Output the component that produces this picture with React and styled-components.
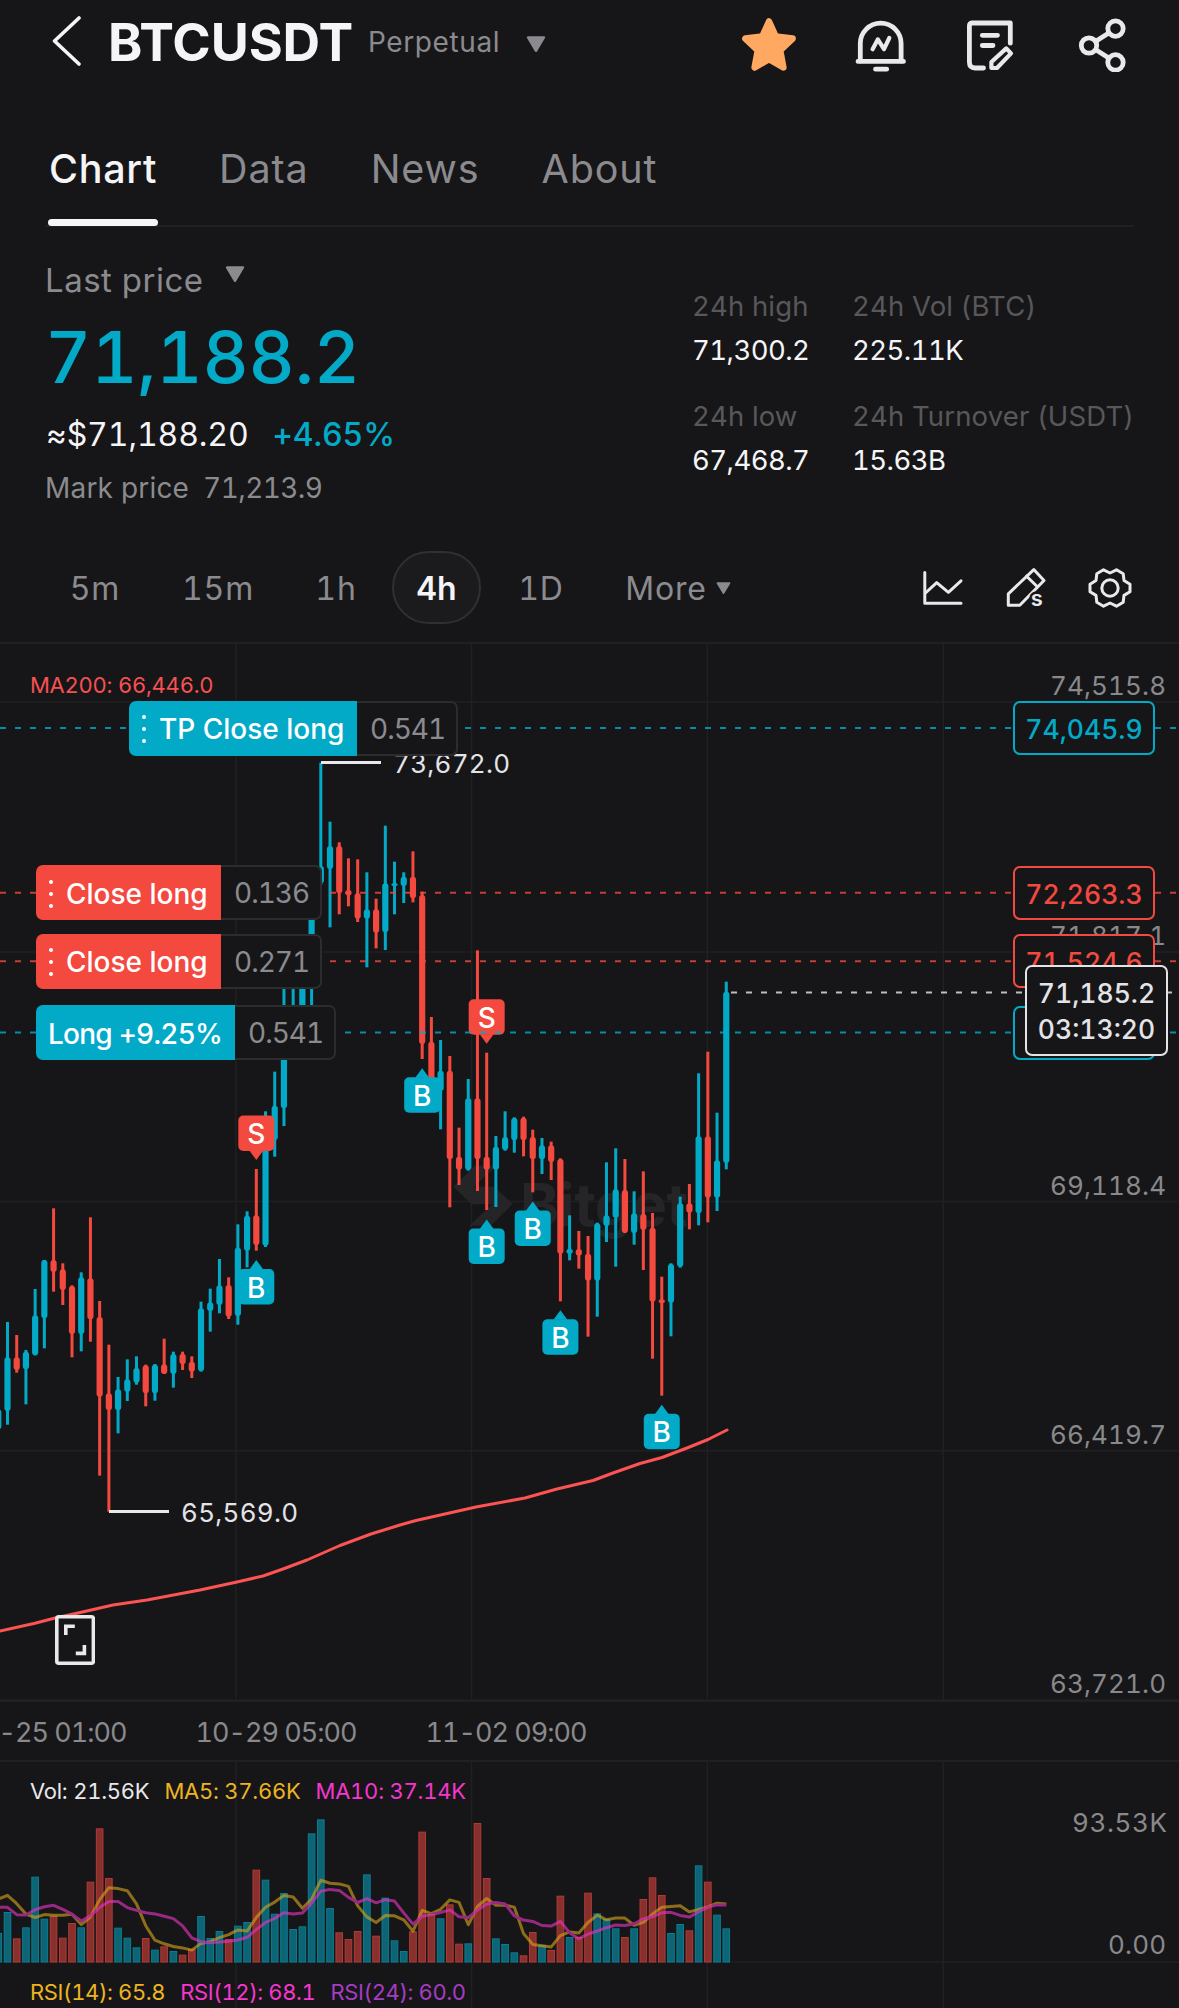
import React from 'react';
import styled, { createGlobalStyle, css } from 'styled-components';

const UP = '#03aac8';
const DOWN = '#f3493f';
const FONT = "'Inter', 'Liberation Sans', sans-serif";

// candle columns are evenly spaced, the first one is cut by the left edge
const STEP = 9.215;
const colX = (i) => 7.5 + STEP * i;

// [up, high, body top, body bottom, low]
const candles = [
  [1, 988, 988, 1048, 1048],
  [1, 726, 832, 993, 1034],
  [0, 765, 832, 870, 878],
  [1, 810, 815, 868, 973],
  [1, 627, 706, 826, 826],
  [1, 540, 540, 715, 805],
  [0, 385, 540, 576, 635],
  [0, 550, 568, 630, 675],
  [0, 616, 618, 762, 832],
  [1, 577, 592, 762, 814],
  [0, 412, 595, 718, 785],
  [0, 663, 711, 950, 1187],
  [0, 794, 940, 991, 1295],
  [1, 891, 928, 991, 1060],
  [1, 838, 898, 935, 963],
  [1, 829, 864, 908, 914],
  [0, 854, 856, 940, 979],
  [1, 852, 854, 940, 962],
  [0, 776, 853, 882, 882],
  [1, 815, 822, 882, 923],
  [0, 815, 821, 853, 870],
  [0, 829, 845, 875, 894],
  [1, 665, 685, 873, 875],
  [1, 626, 667, 693, 755],
  [1, 537, 616, 675, 700],
  [0, 592, 615, 710, 717],
  [1, 433, 503, 708, 734],
  [1, 394, 407, 512, 562],
  [0, 267, 406, 495, 512],
  [1, 94, 130, 497, 501],
  [1, -25, 77, 180, 230],
  [1, -400, -150, 85, 138],
  [1, -400, -200, -110, -90],
  [1, -420, -400, -110, -90],
  [1, -620, -600, -320, -150],
  [1, -952, -642, -590, -585],
  [1, -775, -702, -633, -458],
  [0, -713, -702, -560, -497],
  [0, -665, -570, -553, -521],
  [0, -662, -560, -484, -474],
  [1, -623, -512, -484, -338],
  [0, -544, -512, -442, -395],
  [1, -763, -590, -443, -390],
  [1, -655, -591, -582, -497],
  [1, -623, -610, -582, -531],
  [0, -686, -610, -545, -533],
  [0, -565, -555, -108, -63],
  [0, -189, -115, 10, 15],
  [1, -120, -28, 33, 148],
  [0, -72, -28, 238, 382],
  [0, 143, 230, 269, 315],
  [1, -3, 55, 270, 272],
  [0, -389, 55, 238, 333],
  [0, -82, 230, 269, 390],
  [1, 168, 200, 269, 381],
  [1, 94, 171, 210, 212],
  [1, 112, 114, 181, 218],
  [0, 110, 113, 181, 229],
  [0, 149, 171, 238, 337],
  [1, 174, 196, 238, 282],
  [0, 185, 196, 246, 300],
  [0, 235, 237, 521, 664],
  [1, 406, 506, 522, 541],
  [0, 453, 507, 527, 566],
  [0, 468, 521, 602, 770],
  [1, 428, 430, 602, 710],
  [1, 247, 406, 438, 486],
  [1, 205, 328, 413, 560],
  [0, 237, 330, 458, 459],
  [1, 334, 400, 459, 494],
  [0, 274, 402, 450, 570],
  [0, 399, 443, 665, 836],
  [0, 590, 658, 669, 947],
  [1, 550, 552, 668, 769],
  [1, 350, 370, 560, 563],
  [0, 312, 370, 398, 448],
  [1, -20, 169, 400, 436],
  [0, -85, 169, 353, 427],
  [1, 98, 241, 353, 393],
  [1, -295, -265, 249, 268],
];

const candleY = (v) => 438 + v / 3;

// volumes before the visible range, only used by the averages
const volumeHistory = [150, 291, 114, 96, 44, 95, 196, 259, 308];
const volumes = [
  87, 150, 71, 104, 256, 130, 139, 73, 117, 104, 241, 401, 252, 103, 73, 44,
  72, 37, 47, 33, 22, 39, 138, 72, 93, 69, 109, 120, 277, 247, 145, 207, 99,
  107, 386, 428, 162, 89, 69, 93, 263, 79, 193, 65, 33, 92, 391, 144, 131, 173,
  55, 56, 417, 252, 71, 54, 29, 20, 90, 51, 36, 199, 75, 75, 208, 146, 129,
  101, 75, 101, 189, 254, 201, 87, 114, 95, 290, 241, 142, 101,
];

const VOL_BASE = 202;

const averageLine = (size) => {
  const all = [...volumeHistory, ...volumes];
  return volumes
    .map((_, i) => {
      const end = i + volumeHistory.length + 1;
      const part = all.slice(end - size, end);
      const avg = part.reduce((a, b) => a + b, 0) / size;
      return `${colX(i - 1).toFixed(1)},${(VOL_BASE - avg / 3).toFixed(1)}`;
    })
    .join(' ');
};

const gridX = [235.7, 471.5, 707.4, 943.3];

const priceAxis = [
  { y: 60, label: '74,515.8' },
  { y: 310, label: '71,817.1' },
  { y: 559.5, label: '69,118.4' },
  { y: 808.7, label: '66,419.7' },
  { y: 1058, label: '63,721.0' },
];

const orders = [
  { y: 86, left: 129, tone: UP, grip: true, text: 'TP Close long', width: 228, size: '0.541', price: '74,045.9', from: 465 },
  { y: 250.7, left: 36, tone: DOWN, grip: true, text: 'Close long', width: 185, size: '0.136', price: '72,263.3', from: 330 },
  { y: 319.2, left: 36, tone: DOWN, grip: true, text: 'Close long', width: 185, size: '0.271', price: '71,524.6', from: 330 },
  { y: 390.5, left: 36, tone: UP, text: 'Long +9.25%', width: 199, size: '0.541', from: 345 },
];

const trades = [
  { i: 27, side: 'S', y: 518 },
  { i: 27, side: 'B', y: 618 },
  { i: 45, side: 'B', y: 426.3 },
  { i: 52, side: 'S', y: 401.8 },
  { i: 52, side: 'B', y: 577.4 },
  { i: 57, side: 'B', y: 559.4 },
  { i: 60, side: 'B', y: 668.2 },
  { i: 71, side: 'B', y: 762.7 },
];

const stats = [
  ['24h high', '71,300.2'],
  ['24h Vol (BTC)', '225.11K'],
  ['24h low', '67,468.7'],
  ['24h Turnover (USDT)', '15.63B'],
];

const Caret = ({ size = 20 }) => (
  <svg width={size} height={size * 0.82} viewBox="0 0 20 16.4">
    <path d="M2 1.5H18L10 14.8Z" fill="#8b8b8f" stroke="#8b8b8f" strokeWidth="2.4" strokeLinejoin="round" />
  </svg>
);

const StarIcon = () => (
  <HeaderIcon viewBox="0 0 56 56">
    <path
      d="M28 5.5L34.8 20.6L51.6 22.6L39.2 34.4L42.4 51.5L28 43.2L13.6 51.5L16.8 34.4L4.4 22.6L21.2 20.6Z"
      fill="#ffa862"
      stroke="#ffa862"
      strokeWidth="6.5"
      strokeLinejoin="round"
    />
  </HeaderIcon>
);

const AlertIcon = () => (
  <HeaderIcon viewBox="0 0 56 56">
    <path d="M8.3 45V27.5a20.4 20.4 0 0 1 40.8 0V45" />
    <path d="M6 45.4H51.5M23.5 53.2H34.7" />
    <path d="M20.6 33.2L25.8 23.4L32 33.2L37.3 22" strokeWidth="4.2" />
  </HeaderIcon>
);

const NoteIcon = () => (
  <HeaderIcon viewBox="0 0 56 56">
    <path d="M47.3 27.2V7H9a3 3 0 0 0-2.6 3V46q0 6 5.6 6H20.5" />
    <path d="M19.3 19.3H34.5M19.3 29.5H30" />
    <path d="M28.4 52V46L43.3 32.4L48 37.4L34 52Z" strokeWidth="4.2" />
  </HeaderIcon>
);

const ShareIcon = () => (
  <HeaderIcon viewBox="0 0 56 56">
    <circle cx="41.5" cy="12.6" r="7.7" />
    <circle cx="15" cy="29.5" r="7.7" />
    <circle cx="41.5" cy="46.4" r="7.7" />
    <path d="M21.8 25.2L34.8 16.9M21.8 33.8L34.8 42.1" />
  </HeaderIcon>
);

const LineIcon = () => (
  <ToolIcon viewBox="0 0 44 44">
    <path d="M4.8 6.5V37.3H41" />
    <path d="M5.5 27L16.7 16.6L28.4 26.3L41 14.8" />
  </ToolIcon>
);

const DrawIcon = () => (
  <ToolIcon viewBox="0 0 44 44">
    <path d="M4.3 39.3V27.8L29.8 3.6L40 14.5L15.8 39.3Z" />
    <path d="M22.6 10.2L33.4 20.8" />
    <text x="26.8" y="40" fill="#e9e9ec" stroke="#161618" strokeWidth="5" paintOrder="stroke" fontSize="22" fontWeight="600" fontFamily={FONT}>
      s
    </text>
  </ToolIcon>
);

const GearIcon = () => (
  <ToolIcon viewBox="0 0 44 44">
    <path d="M15.5 3.8L22 7L28.5 3.8L35.2 7.8L36 14.4L42 18.2V25.8L36 29.4L35.2 36.2L28.5 40.2L22 37L15.5 40.2L8.8 36.2L8 29.4L2 25.8V18.2L8 14.4L8.8 7.8Z" />
    <circle cx="22" cy="22" r="8.2" />
  </ToolIcon>
);

const TradeMark = ({ i, side, y }) => {
  const buy = side === 'B';
  const top = buy ? y + 9 : y - 44.5;
  const base = buy ? y + 9.5 : y - 9.5;
  const x = colX(i);
  return (
    <g>
      <rect x={x - 18} y={top} width="36" height="35.5" rx="5" fill={buy ? UP : DOWN} />
      <path d={`M${x} ${y}L${x - 7} ${base}H${x + 7}Z`} fill={buy ? UP : DOWN} />
      <ChartText x={x} y={top + 28.5} textAnchor="middle" fill="#fff" fontSize="28" fontWeight="500">
        {side}
      </ChartText>
    </g>
  );
};

const PriceChart = () => (
  <ChartSvg viewBox="0 0 1179 1058" height="1058">
    <g stroke="#202023" strokeWidth="1.5">
      {gridX.map((x) => <path key={x} d={`M${x} 0V1058`} />)}
      {priceAxis.map((p) => <path key={p.y} d={`M0 ${p.y}H1179`} />)}
    </g>
    <g fill="#252528">
      <path d="M475 523.7H496.7L474 544.7L492.3 562.3H471.7L453.3 544.7Z" />
      <path d="M474 544.7H494.3L512.7 562L490.7 583.7H469L492.3 562.3Z" />
      <ChartText x="520" y="583.5" fontSize="59" fontWeight="700" textLength="168">Bitget</ChartText>
    </g>
    {priceAxis.map((p) => (
      <ChartText key={p.label} x="1050" y={p.y - 7} fill="#89898c" fontSize="26" textLength="116">
        {p.label}
      </ChartText>
    ))}
    {candles.map(([up, high, top, bottom, low], n) => {
      const x = colX(n - 1);
      return (
        <g key={n} fill={up ? UP : DOWN}>
          <rect x={x - 1.5} y={candleY(high)} width="3" height={(low - high) / 3} />
          <rect x={x - 3.1} y={candleY(top)} width="6.2" height={(bottom - top) / 3} rx="3" />
        </g>
      );
    })}
    <path
      d="M0 989L35 981.3L55 976L78 971L113 963L147 958L200 948L237 940L263 934L283 927L307 918L340 903.5L371 892L400 883L416 878.5L476 865L525 856L557 847L593 838.5L613 831L640 821.5L662 815.5L687 806L708 797.5L727 788"
      fill="none"
      stroke="#fb5453"
      strokeWidth="3"
      strokeLinejoin="round"
      strokeLinecap="round"
    />
    <path d="M321 120.5H381M109 869.5H169" stroke="#e9e9ec" strokeWidth="3" />
    <ChartText x="393" y="131" fill="#e4e4e8" fontSize="26" textLength="117">73,672.0</ChartText>
    <ChartText x="181" y="880" fill="#e4e4e8" fontSize="26" textLength="117">65,569.0</ChartText>
    {trades.map((t) => <TradeMark key={`${t.i}${t.side}`} {...t} />)}
    <g strokeWidth="2" strokeDasharray="6 9" opacity="0.8">
      {orders.map((o) => (
        <g key={o.y} stroke={o.tone}>
          <path d={`M0 ${o.y}H${o.left}`} />
          <path d={`M${o.from} ${o.y}H1179`} />
        </g>
      ))}
      <path d="M731 350.5H1172" stroke="#e9e9ec" />
    </g>
  </ChartSvg>
);

const VolumeChart = () => (
  <ChartSvg viewBox="0 0 1179 248" height="248">
    <g stroke="#202023" strokeWidth="1.5">
      {gridX.map((x) => <path key={x} d={`M${x} 0V248`} />)}
      <path d="M0 202H1179" />
    </g>
    {volumes.map((v, n) => {
      const tone = candles[n][0] ? '#0a7d92' : '#b23a35';
      const fill = candles[n][0] ? '#0c6474' : '#87302d';
      return (
        <rect key={n} x={colX(n - 1) - 3.3} y={VOL_BASE - v / 3 + 0.5} width="6.6" height={v / 3 - 0.5} fill={fill} stroke={tone} />
      );
    })}
    <g fill="none" strokeWidth="3" strokeLinejoin="round" opacity="0.62">
      <polyline points={averageLine(5)} stroke="#d3a31c" />
      <polyline points={averageLine(10)} stroke="#ea33c4" />
    </g>
    <ChartText x="1072" y="72" fill="#89898c" fontSize="26" textLength="95">93.53K</ChartText>
    <ChartText x="1108" y="194" fill="#89898c" fontSize="26" textLength="58">0.00</ChartText>
  </ChartSvg>
);

const App = () => (
  <Screen>
    <GlobalStyle />
    <Header>
      <BackIcon viewBox="0 0 30 52">
        <path d="M27 3L2.5 26L27 49" />
      </BackIcon>
      <Pair>BTCUSDT</Pair>
      <Contract>Perpetual</Contract>
      <Caret />
      <HeaderActions>
        <StarIcon />
        <AlertIcon />
        <NoteIcon />
        <ShareIcon />
      </HeaderActions>
    </Header>

    <Tabs>
      <Tab $active>Chart</Tab>
      <Tab>Data</Tab>
      <Tab>News</Tab>
      <Tab>About</Tab>
    </Tabs>

    <Summary>
      <div>
        <PriceSource>
          Last price <Caret />
        </PriceSource>
        <LastPrice>71,188.2</LastPrice>
        <Fiat>
          ≈$71,188.20 <Change>+4.65%</Change>
        </Fiat>
        <MarkPrice>
          <span>Mark price</span>
          <MarkValue>71,213.9</MarkValue>
        </MarkPrice>
      </div>
      <Stats>
        {stats.map(([label, value]) => (
          <div key={label}>
            <StatLabel>{label}</StatLabel>
            <StatValue>{value}</StatValue>
          </div>
        ))}
      </Stats>
    </Summary>

    <Toolbar>
      <Frames>
        <Frame>5m</Frame>
        <Frame>15m</Frame>
        <Frame>1h</Frame>
        <Frame $active>4h</Frame>
        <Frame>1D</Frame>
        <Frame>More <Caret size={15} /></Frame>
      </Frames>
      <Tools>
        <LineIcon />
        <DrawIcon />
        <GearIcon />
      </Tools>
    </Toolbar>

    <PricePane>
      <PriceChart />
      <Indicators $top={28}>
        <Indicator $color="#f75151">MA200: 66,446.0</Indicator>
      </Indicators>
      {orders.map((o) => (
        <Order key={o.y} $top={o.y - 27.5} $left={o.left}>
          <OrderSide $tone={o.tone} $width={o.width} $tight={!o.grip}>
            {o.grip && <Grip><i /><i /><i /></Grip>}
            {o.text}
          </OrderSide>
          <OrderSize>{o.size}</OrderSize>
        </Order>
      ))}
      {orders.map((o) => (
        <PriceTag key={o.y} $top={o.y - 27} $tone={o.tone}>{o.price}</PriceTag>
      ))}
      <CurrentTag>
        <span>71,185.2</span>
        <span>03:13:20</span>
      </CurrentTag>
      <Fullscreen viewBox="0 0 40 50">
        <rect x="1.8" y="1.8" width="36.6" height="46.4" rx="2" />
        <path d="M10.8 20V11.2H19.8M29.4 30V38.4H20.8" />
      </Fullscreen>
    </PricePane>

    <TimeAxis>
      <span>10-25 01:00</span>
      <span>10-29 05:00</span>
      <span>11-02 09:00</span>
    </TimeAxis>

    <VolumePane>
      <VolumeChart />
      <Indicators $top={16}>
        <Indicator $color="#e9e9ec">Vol: 21.56K</Indicator>
        <Indicator $color="#ecb421">MA5: 37.66K</Indicator>
        <Indicator $color="#f536cd">MA10: 37.14K</Indicator>
      </Indicators>
      <Indicators $top={217}>
        <Indicator $color="#ecb421" $spacing={-0.4}>RSI(14): 65.8</Indicator>
        <Indicator $color="#f536cd" $spacing={-0.4}>RSI(12): 68.1</Indicator>
        <Indicator $color="#a53cc4" $spacing={-0.4}>RSI(24): 60.0</Indicator>
      </Indicators>
    </VolumePane>
  </Screen>
);

const GlobalStyle = createGlobalStyle`
  * {
    box-sizing: border-box;
  }

  body {
    margin: 0;
    background: #161618;
  }
`;

const Screen = styled.div`
  width: 1179px;
  height: 2008px;
  overflow: hidden;
  background: #161618;
  color: #f5f5f7;
  font-family: ${FONT};
  font-feature-settings: 'tnum';
  white-space: nowrap;
`;

const Header = styled.header`
  display: flex;
  align-items: center;
  height: 88px;
  padding: 0 49px 0 52px;
`;

const BackIcon = styled.svg`
  width: 30px;
  height: 52px;
  margin: 0 26px 6px 0;
  fill: none;
  stroke: #f5f5f7;
  stroke-width: 3.6;
  stroke-linecap: round;
  stroke-linejoin: round;
`;

const Pair = styled.h1`
  margin: 0 15px 2px 0;
  font-size: 52px;
  font-weight: 700;
  line-height: 60px;
  letter-spacing: -0.1px;
`;

const Contract = styled.span`
  margin: 0 26px 4px 0;
  color: #8b8b8f;
  font-size: 28px;
  line-height: 36px;
  letter-spacing: 0.6px;
`;

const HeaderActions = styled.div`
  display: flex;
  gap: 55px;
  margin-left: auto;
`;

const HeaderIcon = styled.svg`
  width: 56px;
  height: 56px;
  fill: none;
  stroke: #e9e9ec;
  stroke-width: 4.8;
  stroke-linecap: round;
  stroke-linejoin: round;
`;

const Tabs = styled.nav`
  display: flex;
  gap: 62px;
  height: 139px;
  margin: 0 45px;
  padding: 57px 0 0 4px;
  border-bottom: 2px solid #202023;
`;

const Tab = styled.div`
  position: relative;
  color: #8b8b8f;
  font-size: 39.5px;
  line-height: 48px;
  letter-spacing: 0.9px;

  ${({ $active }) => $active && css`
    color: #f5f5f7;
    font-weight: 500;
    letter-spacing: 0.7px;

    &::after {
      content: '';
      position: absolute;
      left: -1px;
      right: -1px;
      bottom: -1px;
      height: 7px;
      border-radius: 4px;
      background: #f5f5f7;
    }
  `}
`;

const Summary = styled.section`
  display: flex;
  justify-content: space-between;
  height: 308px;
  padding: 31px 46px 0 45px;
`;

const PriceSource = styled.div`
  display: flex;
  align-items: center;
  gap: 21px;
  color: #8b8b8f;
  font-size: 33px;
  line-height: 44px;
  letter-spacing: 0.5px;

  svg {
    margin-bottom: 11px;
  }
`;

const LastPrice = styled.div`
  margin-top: 13px;
  color: ${UP};
  font-size: 71.5px;
  font-weight: 500;
  line-height: 84px;
  letter-spacing: -0.2px;
`;

const Fiat = styled.div`
  margin-top: 16px;
  padding-left: 1px;
  font-size: 32px;
  line-height: 40px;
  letter-spacing: -0.1px;
`;

const Change = styled.span`
  margin-left: 15px;
  color: ${UP};
  font-weight: 500;
`;

const MarkPrice = styled.div`
  display: flex;
  gap: 14px;
  margin-top: 15px;
  color: #8b8b8f;
  font-size: 28px;
  line-height: 36px;
  letter-spacing: 0.2px;
`;

const MarkValue = styled.span`
  letter-spacing: -0.6px;
`;

const Stats = styled.div`
  display: grid;
  grid-template-columns: 160px 281px;
  row-gap: 24px;
  align-content: start;
  padding-top: 27px;
  font-size: 27.5px;
  line-height: 43px;
`;

const StatLabel = styled.div`
  color: #58585b;
  letter-spacing: 0.15px;
`;

const StatValue = styled.div`
  position: relative;
  top: 1px;
  color: #f5f5f7;
  letter-spacing: -0.55px;
`;

const Toolbar = styled.div`
  display: flex;
  justify-content: space-between;
  align-items: center;
  height: 107px;
  padding: 0 47px 2px 34px;
`;

const Frames = styled.div`
  display: grid;
  grid-template-columns: 122px 124px 112px 89px 120px 154px;
  padding-left: 0;
`;

const Frame = styled.div`
  display: flex;
  align-items: center;
  justify-content: center;
  gap: 9px;
  height: 73px;
  padding-top: 2px;
  color: #8b8b8f;
  font-size: 32px;
  letter-spacing: 0.8px;

  ${({ $active }) => $active && css`
    border: 2px solid #303033;
    border-radius: 37px;
    background: #1b1b1d;
    color: #f5f5f7;
    font-weight: 600;
    letter-spacing: 0;
  `}
`;

const Tools = styled.div`
  display: flex;
  gap: 40px;
`;

const ToolIcon = styled.svg`
  width: 44px;
  height: 44px;
  fill: none;
  stroke: #e9e9ec;
  stroke-width: 3;
  stroke-linecap: round;
  stroke-linejoin: round;
`;

const PricePane = styled.section`
  position: relative;
  height: 1058px;
  border-top: 2px solid #202023;
`;

const ChartSvg = styled.svg`
  display: block;
  width: 1179px;
  margin-top: -2px;
`;

const ChartText = styled.text`
  font-family: ${FONT};
`;

const Indicators = styled.div`
  position: absolute;
  top: ${({ $top }) => $top - 2}px;
  left: 30px;
  display: flex;
  gap: 15px;
`;

const Indicator = styled.span`
  color: ${({ $color }) => $color};
  font-size: 22px;
  line-height: 30px;
  letter-spacing: ${({ $spacing = -0.25 }) => $spacing}px;
`;

const Order = styled.div`
  position: absolute;
  top: ${({ $top }) => $top - 2}px;
  left: ${({ $left }) => $left}px;
  display: flex;
  height: 55px;
  border-radius: 7px;
  background: #161618;
  font-size: 28px;
  line-height: 54px;
`;

const OrderSide = styled.div`
  display: flex;
  align-items: center;
  width: ${({ $width }) => $width}px;
  padding: 2px 0 0 12px;
  border-radius: 7px 0 0 7px;
  background: ${({ $tone }) => $tone};
  color: #fff;
  font-weight: 500;
  letter-spacing: ${({ $tight }) => ($tight ? -0.75 : 0)}px;
`;

const Grip = styled.span`
  display: flex;
  flex-direction: column;
  gap: 8px;
  margin-right: 13px;
  padding-left: 1px;

  i {
    width: 4px;
    height: 4px;
    border-radius: 50%;
    background: #fff;
  }
`;

const OrderSize = styled.div`
  width: 101px;
  padding-left: 13px;
  border: 2px solid #2c2c2f;
  border-left: 0;
  border-radius: 0 7px 7px 0;
  color: #8b8b8f;
  line-height: 53px;
  letter-spacing: -1px;
`;

const PriceTag = styled.div`
  position: absolute;
  top: ${({ $top }) => $top - 2}px;
  left: 1013px;
  width: 142px;
  height: 54px;
  border: 2px solid ${({ $tone }) => $tone};
  border-radius: 7px;
  background: #161618;
  color: ${({ $tone }) => $tone};
  font-size: 26.5px;
  font-weight: 500;
  line-height: 53px;
  text-align: center;
`;

const CurrentTag = styled.div`
  position: absolute;
  top: 321px;
  left: 1025px;
  display: flex;
  flex-direction: column;
  width: 143px;
  height: 91px;
  padding-top: 8px;
  border: 2px solid #e4e4e8;
  border-radius: 7px;
  background: #161618;
  color: #e4e4e8;
  font-size: 26.5px;
  font-weight: 500;
  line-height: 36px;
  text-align: center;
`;

const Fullscreen = styled.svg`
  position: absolute;
  top: 971px;
  left: 55px;
  width: 40px;
  height: 50px;
  fill: #161618;
  stroke: #e9e9ec;
  stroke-width: 3.6;
`;

const TimeAxis = styled.div`
  display: grid;
  grid-template-columns: 230px 230px 230px;
  height: 60px;
  margin-left: -69px;
  border-top: 2px solid #202023;
  color: #89898c;
  font-size: 27px;
  line-height: 62px;
  letter-spacing: -1px;
  text-align: center;
`;

const VolumePane = styled.section`
  position: relative;
  height: 248px;
  border-top: 2px solid #202023;
`;

export default App;
